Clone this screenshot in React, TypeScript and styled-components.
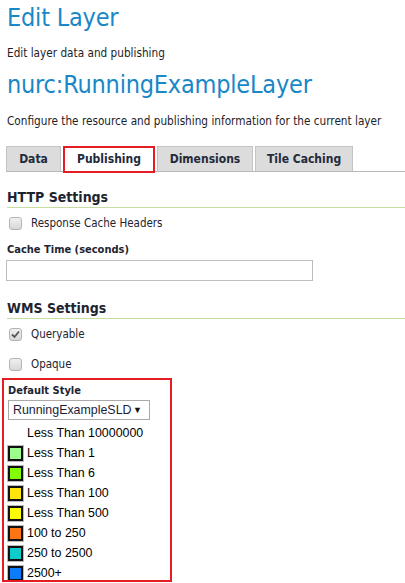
import React from "react";
import styled, { createGlobalStyle } from "styled-components";

const Global = createGlobalStyle`
  html, body { margin: 0; padding: 0; background: #fff; }
  body { font-family: "DejaVu Sans Condensed", "DejaVu Sans", sans-serif; color: #1d2430; }
`;

const Page = styled.div`
  padding: 0 0 0 7px;
  width: 398px;
  height: 583px;
  overflow: hidden;
`;

const Title = styled.h1<{ $top: number }>`
  margin: ${(p) => p.$top}px 0 0 0;
  font-family: "DejaVu Sans Condensed", "DejaVu Sans", sans-serif;
  font-weight: normal;
  font-size: 25px;
  line-height: 30px;
  color: #1a87c7;
  letter-spacing: -0.2px;
`;

const Sub = styled.p<{ $top: number }>`
  margin: ${(p) => p.$top}px 0 0 0;
  font-size: 11.7px;
  line-height: 14px;
  color: #1d1d28;
`;

const Tabs = styled.div`
  display: flex;
  align-items: flex-end;
  gap: 2px;
  margin: 18px 0 0 -1px;
  border-bottom: 1px solid #b8b8b8;
  height: 25px;
`;

const Tab = styled.div<{ $active?: boolean; $w: number }>`
  box-sizing: border-box;
  width: ${(p) => p.$w}px;
  height: ${(p) => (p.$active ? 27 : 25)}px;
  margin-bottom: ${(p) => (p.$active ? -2 : 0)}px;
  display: flex;
  align-items: center;
  justify-content: center;
  padding-bottom: ${(p) => (p.$active ? 1 : 0)}px;
  font-weight: bold;
  font-size: 12px;
  color: #232a3a;
  background: ${(p) => (p.$active ? "#fff" : "#dcdcdc")};
  border: ${(p) => (p.$active ? "2px solid #e41c24" : "1px solid #c4c4c4")};
  border-bottom: ${(p) => (p.$active ? "2px solid #e41c24" : "none")};
`;

const Section = styled.h2<{ $top: number }>`
  margin: ${(p) => p.$top}px 0 0 0;
  font-size: 14px;
  line-height: 20px;
  font-weight: bold;
  color: #1d2430;
  border-bottom: 1px solid #c3dea0;
  padding-bottom: 0;
`;

const CheckRow = styled.label<{ $top: number }>`
  display: flex;
  align-items: center;
  gap: 9px;
  margin: ${(p) => p.$top}px 0 0 2px;
  font-size: 11.5px;
  line-height: 14px;
  color: #1d2430;
`;

const Box = styled.span`
  box-sizing: border-box;
  width: 13px;
  height: 13px;
  border: 1px solid #b4b4b4;
  border-radius: 3px;
  background: linear-gradient(#f0f0f0, #d8d8d8);
  display: flex;
  align-items: center;
  justify-content: center;
`;

const FieldLabel = styled.div<{ $top: number }>`
  margin: ${(p) => p.$top}px 0 0 0;
  font-size: 11px;
  font-weight: bold;
  line-height: 14px;
  color: #1d2430;
`;

const TextInput = styled.div`
  box-sizing: border-box;
  margin: 3px 0 0 -1px;
  width: 307px;
  height: 21px;
  border: 1px solid #bdbdbd;
  background: #fff;
`;

const StyleBox = styled.div`
  box-sizing: border-box;
  margin: 7px 0 0 -5px;
  width: 170px;
  height: 204px;
  border: 2px solid #e41c24;
  padding: 4px 0 0 4px;
  overflow: hidden;
`;

const Select = styled.div`
  box-sizing: border-box;
  margin-top: 2px;
  width: 142px;
  height: 20px;
  border: 1px solid #aaa;
  display: flex;
  align-items: center;
  justify-content: space-between;
  padding: 0 7px 0 4px;
  font-family: "Liberation Sans", Arial, sans-serif;
  font-size: 12.4px;
  color: #1d1d38;
`;

const Arrow = styled.span`
  font-size: 9px;
  color: #111;
`;

const Legend = styled.div`
  margin-top: 3px;
  display: flex;
  flex-direction: column;
`;

const LegendRow = styled.div`
  display: flex;
  align-items: center;
  height: 20px;
  flex: none;
  font-family: "Liberation Sans", Arial, sans-serif;
  font-size: 12.4px;
  color: #000;
`;

const Swatch = styled.span<{ $c?: string }>`
  box-sizing: border-box;
  width: 15px;
  height: 15px;
  margin-right: 4px;
  border: ${(p) => (p.$c ? "2px solid #111" : "none")};
  outline: ${(p) => (p.$c ? "1px solid #bbb" : "none")};
  background: ${(p) => p.$c || "transparent"};
`;

const legend: [string, string | undefined][] = [
  ["Less Than 10000000", undefined],
  ["Less Than 1", "#9cfc8c"],
  ["Less Than 6", "#82fc04"],
  ["Less Than 100", "#fce40c"],
  ["Less Than 500", "#fcfc04"],
  ["100 to 250", "#fc7414"],
  ["250 to 2500", "#0ccccc"],
  ["2500+", "#0c7cfc"],
];

const Check = () => (
  <svg width="9" height="9" viewBox="0 0 9 9">
    <path d="M1 4.5 L3.5 7 L8 1.5" fill="none" stroke="#555" strokeWidth="1.8" />
  </svg>
);

export default function App() {
  return (
    <>
      <Global />
      <Page>
        <Title $top={3}>Edit Layer</Title>
        <Sub $top={13}>Edit layer data and publishing</Sub>
        <Title $top={10}>nurc:RunningExampleLayer</Title>
        <Sub $top={14}>Configure the resource and publishing information for the current layer</Sub>
        <Tabs>
          <Tab $w={55}>Data</Tab>
          <Tab $w={92} $active>Publishing</Tab>
          <Tab $w={96}>Dimensions</Tab>
          <Tab $w={98}>Tile Caching</Tab>
        </Tabs>
        <Section $top={15}>HTTP Settings</Section>
        <CheckRow $top={8}>
          <Box />
          Response Cache Headers
        </CheckRow>
        <FieldLabel $top={13}>Cache Time (seconds)</FieldLabel>
        <TextInput />
        <Section $top={17}>WMS Settings</Section>
        <CheckRow $top={8}>
          <Box>
            <Check />
          </Box>
          Queryable
        </CheckRow>
        <CheckRow $top={16}>
          <Box />
          Opaque
        </CheckRow>
        <StyleBox>
          <FieldLabel $top={0}>Default Style</FieldLabel>
          <Select>
            <span>RunningExampleSLD</span>
            <Arrow>▼</Arrow>
          </Select>
          <Legend>
            {legend.map(([t, c]) => (
              <LegendRow key={t}>
                <Swatch $c={c} />
                {t}
              </LegendRow>
            ))}
          </Legend>
        </StyleBox>
      </Page>
    </>
  );
}
